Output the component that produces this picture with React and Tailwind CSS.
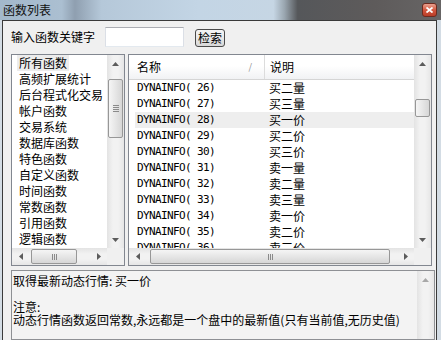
import React from "react";

const categories = ["所有函数", "高频扩展统计", "后台程式化交易", "帐户函数", "交易系统", "数据库函数", "特色函数", "自定义函数", "时间函数", "常数函数", "引用函数", "逻辑函数"];

const rows = [
    ["26", "买二量"], ["27", "买三量"], ["28", "买一价"], ["29", "买二价"], ["30", "买三价"], ["31", "卖一量"],
    ["32", "卖二量"], ["33", "卖三量"], ["34", "卖一价"], ["35", "卖二价"], ["36", "卖三价"],
];

function Arrow({ dir, color = "#5c5c5c" }) {
    if (dir === "up") return <svg width="7" height="4"><polygon points="0,4 3.5,0 7,4" fill={color} /></svg>;
    if (dir === "down") return <svg width="7" height="4"><polygon points="0,0 3.5,4 7,0" fill={color} /></svg>;
    if (dir === "left") return <svg width="4" height="7"><polygon points="4,0 0,3.5 4,7" fill={color} /></svg>;
    return <svg width="4" height="7"><polygon points="0,0 4,3.5 0,7" fill={color} /></svg>;
}

function VScroll({ thumb, grip }) {
    return (
        <div className="flex w-[17px] flex-col bg-[linear-gradient(90deg,#e3e3e3,#f2f2f2_35%,#f2f2f2_65%,#e6e6e6)]">
            <div className="flex h-[17px] items-center justify-center"><Arrow dir="up" /></div>
            <div className="flex flex-1 flex-col">
                <div className={`mx-[1px] flex flex-col items-center justify-center gap-[1px] rounded-[2px] border border-[#979797] bg-[linear-gradient(90deg,#f5f5f5,#e6e6e6_50%,#d6d6d6)] ${thumb}`}>
                    {grip && [0, 1, 2, 3].map(i => <div key={i} className="h-[1px] w-[6px] bg-[#8a8a8a]" />)}
                </div>
            </div>
            <div className="flex h-[17px] items-center justify-center"><Arrow dir="down" /></div>
        </div>
    );
}

function HScroll({ thumb }) {
    return (
        <div className="flex h-[17px] flex-1 bg-[linear-gradient(180deg,#e3e3e3,#f2f2f2_35%,#f2f2f2_65%,#e6e6e6)]">
            <div className="flex w-[17px] items-center justify-center"><Arrow dir="left" /></div>
            <div className="flex flex-1 items-center">
                <div className={`my-[1px] flex h-[15px] items-center justify-center gap-[1px] rounded-[2px] border border-[#979797] bg-[linear-gradient(180deg,#f5f5f5,#e6e6e6_50%,#d6d6d6)] ${thumb}`}>
                    {[0, 1, 2].map(i => <div key={i} className="h-[6px] w-[1px] bg-[#8a8a8a]" />)}
                </div>
            </div>
            <div className="flex w-[17px] items-center justify-center"><Arrow dir="right" /></div>
        </div>
    );
}

export default function App() {
    return (
        <div className="flex h-[340px] w-[441px] flex-col overflow-hidden bg-[#d3dce4] font-['Noto_Sans_CJK_SC','Noto_Sans',sans-serif] text-[12px] text-black">
            {/* title bar */}
            <div className="flex h-[20px] items-center bg-[linear-gradient(90deg,#a3b8cb_0%,#abbfd1_14%,#8f9fb0_17%,#b5c8d9_23%,#c3d5e5_45%,#c6d6e4_62%,#9aa6b0_64.5%,#55575a_67.5%,#5e5b5b_85%,#676565_100%)] pl-[3px]">
                <span className="text-[12px] leading-[14px] text-[#111]">函数列表</span>
                <div className="ml-auto mr-[4px] flex h-[14px] w-[15px] items-center justify-center rounded-[3px] border border-[#6e2a1f] bg-[linear-gradient(180deg,#e9a08f,#d3573f_50%,#b93d27)]">
                    <svg width="7" height="6"><path d="M0.5 0.5 L6.5 5.5 M6.5 0.5 L0.5 5.5" stroke="#fff" strokeWidth="1.8" /></svg>
                </div>
            </div>

            {/* window body */}
            <div className="ml-[2px] mr-[4px] flex flex-1 flex-col border-x border-t border-[#3a3a3a] bg-[#f0f0f0]">
                <div className="mt-[6px] flex h-[20px] items-center pl-[8px]">
                    <span className="w-[94px] leading-[14px]">输入函数关键字</span>
                    <div className="h-[20px] w-[79px] border border-[#abadb3] border-x-[#dbdfe6] border-b-[#e3e9ef] bg-white" />
                    <div className="ml-[11px] mt-[2px] flex h-[18px] w-[30px] items-center justify-center rounded-[3px] border border-[#4a4a4a] bg-[linear-gradient(180deg,#f4f4f4,#e8e8e8_50%,#d8d8d8)] leading-[14px]">检索</div>
                </div>

                <div className="mt-[7px] flex gap-[3px] pl-[8px]">
                    {/* category list */}
                    <div className="flex h-[212px] w-[114px] flex-col border border-[#828790] bg-white">
                        <div className="flex flex-1">
                            <div className="flex flex-1 flex-col items-start overflow-hidden">
                                {categories.map((c, i) => (
                                    <div key={c} className={`ml-[5px] h-[16px] whitespace-nowrap px-[2px] leading-[16px] ${i === 0 ? "bg-[#ececec]" : ""}`}>{c}</div>
                                ))}
                            </div>
                            <VScroll thumb="mt-[7px] h-[59px]" grip />
                        </div>
                        <div className="flex">
                            <HScroll thumb="ml-[2px] w-[46px]" />
                            <div className="w-[17px] bg-[#f0f0f0]" />
                        </div>
                    </div>

                    {/* function table */}
                    <div className="flex h-[212px] w-[304px] flex-col border border-[#828790] bg-white">
                        <div className="flex min-h-0 flex-1">
                            <div className="flex flex-1 flex-col overflow-hidden">
                                <div className="flex h-[25px] shrink-0 items-center border-b border-[#d5d5d5] bg-[linear-gradient(180deg,#ffffff,#ffffff_45%,#f1f2f4)]">
                                    <div className="flex h-full w-[136px] items-center border-r border-[#dcdcdc] pl-[8px]">
                                        <span className="leading-[14px]">名称</span>
                                        <span className="ml-auto mr-[12px] text-[9px] leading-[10px] text-[#8a8a8a]">/</span>
                                    </div>
                                    <span className="pl-[5px] leading-[14px]">说明</span>
                                </div>
                                {rows.map(([n, d]) => (
                                    <div key={n} className={`ml-[6px] flex h-[16px] shrink-0 items-center ${n === "28" ? "bg-[#eeeeee]" : ""}`}>
                                        <span className="w-[134px] pl-[2px] font-['DejaVu_Sans_Mono',monospace] text-[11px] tracking-[-0.62px]">DYNAINFO( {n})</span>
                                        <span className="leading-[14px]">{d}</span>
                                    </div>
                                ))}
                            </div>
                            <VScroll thumb="mt-[27px] h-[18px]" />
                        </div>
                        <div className="flex">
                            <HScroll thumb="ml-[4px] w-[240px]" />
                            <div className="w-[17px] bg-[#f0f0f0]" />
                        </div>
                    </div>
                </div>

                {/* description */}
                <div className="ml-[8px] mt-[4px] flex w-[424px] flex-1 border border-[#8e9094] bg-[#f3f3f3]">
                    <div className="flex-1 pl-[1px] pt-[3px] leading-[13px]">
                        <div>取得最新动态行情: 买一价</div>
                        <div className="h-[13px]" />
                        <div>注意:</div>
                        <div>动态行情函数返回常数,永远都是一个盘中的最新值(只有当前值,无历史值)</div>
                    </div>
                    <div className="flex w-[17px] flex-col bg-[linear-gradient(90deg,#e3e3e3,#f2f2f2_35%,#f2f2f2_65%,#e6e6e6)]">
                        <div className="flex h-[17px] items-center justify-center"><Arrow dir="up" color="#a8a8a8" /></div>
                    </div>
                </div>
            </div>
        </div>
    );
}
